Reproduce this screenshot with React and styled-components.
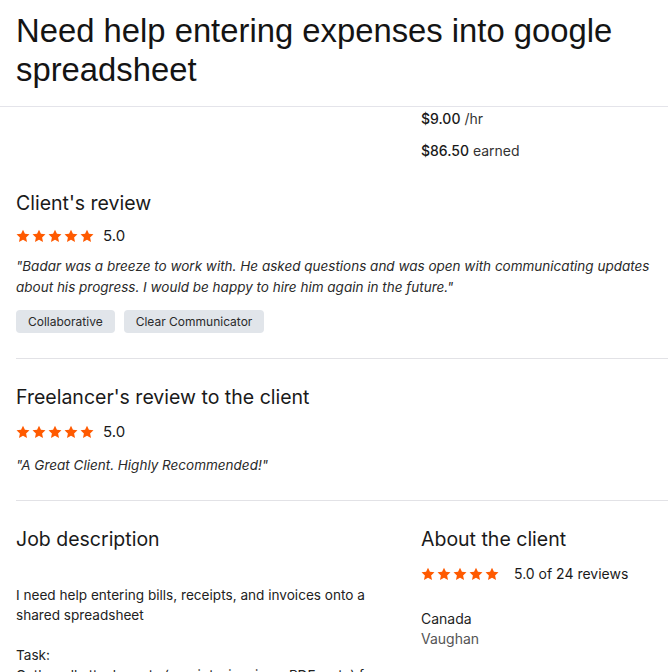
import React from 'react';
import styled, { createGlobalStyle } from 'styled-components';

const GlobalStyle = createGlobalStyle`
    body {
        margin: 0;
        background: #fff;
        color: #1a1a1a;
        font-family: Inter, "Liberation Sans", Arial, sans-serif;
    }
`;

const Page = styled.div`
    width: 668px;
    height: 672px;
    overflow: hidden;
`;

const Header = styled.header`
    padding: 11px 16px 17px;
    border-bottom: 1px solid #e4e4ea;
`;

const Title = styled.h1`
    margin: 0;
    font-family: "Liberation Sans", Arial, sans-serif;
    font-size: 32.8px;
    line-height: 39px;
    font-weight: 400;
    color: #141414;
`;

const Split = styled.div`
    display: grid;
    grid-template-columns: 405px 1fr;
    padding-left: ${(p) => p.$inset || 0}px;
`;

const Stats = styled.div`
    display: flex;
    flex-direction: column;
    gap: 12px;
    padding-top: 2px;
`;

const Stat = styled.div`
    font-size: 14px;
    line-height: 20px;
    color: #333;

    strong {
        font-weight: 500;
        color: #1a1a1a;
    }
`;

const Section = styled.section`
    margin-left: 16px;
    padding: ${(p) => p.$top}px 0 ${(p) => p.$bottom}px;
    border-bottom: ${(p) => (p.$last ? 'none' : '1px solid #e2e2e6')};
`;

const Heading = styled.h2`
    margin: 0;
    font-size: 19.5px;
    line-height: 28px;
    font-weight: 400;
    color: #1a1a1a;
`;

const Rating = styled.div`
    display: flex;
    align-items: center;
    gap: ${(p) => p.$gap || 9}px;
    margin-top: ${(p) => p.$mt || 5}px;
    font-size: ${(p) => p.$size || 15}px;
    line-height: 22px;
    color: #1a1a1a;
`;

const Stars = styled.span`
    display: inline-flex;
    gap: 2px;
`;

const Quote = styled.p`
    margin: ${(p) => p.$mt || 9}px 0 0;
    font-size: 13.5px;
    line-height: 21px;
    font-style: italic;
    color: #2a2a2a;
`;

const Chips = styled.div`
    display: flex;
    gap: 9px;
    margin-top: 12px;
`;

const Chip = styled.span`
    display: inline-block;
    padding: 0 12px;
    height: 23px;
    line-height: 23px;
    border-radius: 4px;
    background: #e1e5ea;
    font-size: 12px;
    color: #2a2a2a;
`;

const Body = styled.p`
    margin: ${(p) => p.$mt || 0}px 0 0;
    font-size: 13.6px;
    line-height: 20px;
    color: #222;
    max-width: ${(p) => p.$max || 'none'};
    white-space: pre-line;
`;

const Location = styled.div`
    margin-top: 24px;
    font-size: 14px;
    line-height: 20px;
    color: #1f1f1f;
`;

const City = styled.div`
    color: #555;
`;

const Star = () => (
    <svg width="14" height="14" viewBox="0 0 24 24">
        <path
            fill="#ff5a00"
            d="M12 1.2l3.3 7.1 7.8.9-5.8 5.3 1.6 7.7L12 18.3l-6.9 3.9 1.6-7.7L.9 9.2l7.8-.9z"
        />
    </svg>
);

const FiveStars = () => (
    <Stars>
        {[0, 1, 2, 3, 4].map((i) => (
            <Star key={i} />
        ))}
    </Stars>
);

const App = () => {
    return (
        <>
            <GlobalStyle />
            <Page>
                <Header>
                    <Title>Need help entering expenses into google spreadsheet</Title>
                </Header>

                <Split $inset={16}>
                    <div />
                    <Stats>
                        <Stat>
                            <strong>$9.00</strong> /hr
                        </Stat>
                        <Stat>
                            <strong>$86.50</strong> earned
                        </Stat>
                    </Stats>
                </Split>

                <Section $top={28} $bottom={25}>
                    <Heading>Client's review</Heading>
                    <Rating $mt={8}>
                        <FiveStars />
                        5.0
                    </Rating>
                    <Quote>
                        "Badar was a breeze to work with. He asked questions and was open with communicating updates
                        about his progress. I would be happy to hire him again in the future."
                    </Quote>
                    <Chips>
                        <Chip>Collaborative</Chip>
                        <Chip>Clear Communicator</Chip>
                    </Chips>
                </Section>

                <Section $top={24} $bottom={24}>
                    <Heading>Freelancer's review to the client</Heading>
                    <Rating $mt={10}>
                        <FiveStars />
                        5.0
                    </Rating>
                    <Quote $mt={12}>"A Great Client. Highly Recommended!"</Quote>
                </Section>

                <Section $top={24} $bottom={0} $last>
                    <Split>
                        <div>
                            <Heading>Job description</Heading>
                            <Body $mt={32} $max="360px">
                                I need help entering bills, receipts, and invoices onto a shared spreadsheet
                            </Body>
                            <Body $mt={20}>
                                {'Task:\nGather all attachments (receipts, invoices, PDFs, etc) from'}
                            </Body>
                        </div>
                        <div>
                            <Heading>About the client</Heading>
                            <Rating $gap={15} $mt={10} $size={14}>
                                <FiveStars />
                                5.0 of 24 reviews
                            </Rating>
                            <Location>
                                Canada
                                <City>Vaughan</City>
                            </Location>
                        </div>
                    </Split>
                </Section>
            </Page>
        </>
    );
};

export default App;
